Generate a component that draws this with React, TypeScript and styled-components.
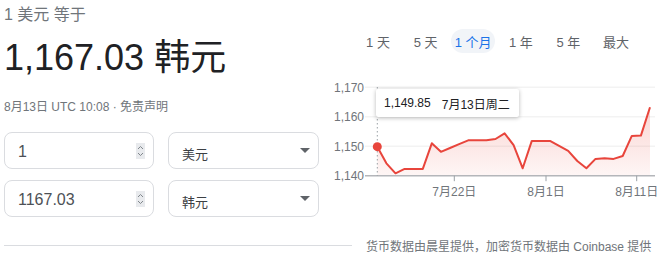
import styled, { createGlobalStyle } from "styled-components";

const GlobalStyle = createGlobalStyle`
  html, body {
    margin: 0;
    padding: 0;
    background: #ffffff;
  }
  body {
    font-family: "Liberation Sans", Arial, "Noto Sans CJK SC", sans-serif;
    color: #202124;
  }
`

const Page = styled.div`
  width: 664px;
  height: 269px;
  overflow: hidden;
  display: flex;
  flex-direction: column;
`

const Top = styled.div`
  display: flex;
  height: 237px;
`

const Left = styled.div`
  width: 330px;
  padding: 5px 0 0 4px;
  box-sizing: border-box;
  display: flex;
  flex-direction: column;
`

const Caption = styled.div`
  font-size: 16px;
  line-height: 20px;
  color: #70757a;
`

const Amount = styled.div`
  margin-top: 11px;
  font-size: 36px;
  line-height: 44px;
  color: #202124;
`

const Stamp = styled.div`
  margin-top: 19px;
  font-size: 12px;
  line-height: 16px;
  color: #70757a;
`

const Form = styled.div`
  margin-top: 17px;
  display: grid;
  grid-template-columns: 150px 151px;
  column-gap: 14px;
  row-gap: 11px;
`

const Field = styled.div`
  height: 37px;
  box-sizing: border-box;
  border: 1px solid #dadce0;
  border-radius: 8px;
  display: flex;
  align-items: center;
  padding: 0 8px 0 13px;
`

const FieldValue = styled.span`
  flex: 1;
  font-size: 16px;
  color: #4d5156;
  padding-top: 3px;
`

const Spinner = styled.span`
  width: 9px;
  height: 16px;
  background: #e8eaed;
  display: flex;
  align-items: center;
  justify-content: center;
`

const SelectValue = styled.span`
  flex: 1;
  font-size: 13px;
  color: #3c4043;
  padding-top: 5px;
`

const Right = styled.div`
  flex: 1;
  display: flex;
  flex-direction: column;
`

const Ranges = styled.div`
  margin-top: 29px;
  display: flex;
  justify-content: center;
  gap: 3.6px;
`

const Range = styled.span<{ $active?: boolean }>`
  width: 44px;
  height: 24px;
  border-radius: 12px;
  display: flex;
  align-items: center;
  justify-content: center;
  font-size: 13px;
  color: ${p => (p.$active ? "#1a73e8" : "#5f6368")};
  background: ${p => (p.$active ? "#f1f4f8" : "transparent")};
  white-space: pre;
`

const ChartWrap = styled.div`
  position: relative;
  margin-top: 25px;
  width: 334px;
  height: 124px;
`

const Tip = styled.div`
  position: absolute;
  left: 46px;
  top: 11px;
  height: 28px;
  padding: 0 9px 0 8px;
  display: flex;
  align-items: center;
  gap: 11px;
  background: #ffffff;
  border-radius: 2px;
  box-shadow: 0 1px 4px rgba(0, 0, 0, 0.28);
  font-size: 12px;
  color: #202124;
  white-space: nowrap;
`

const TipPrice = styled.span`
  font-weight: 500;
`

const Footer = styled.div`
  display: flex;
  align-items: center;
  height: 16px;
`

const Rule = styled.div`
  flex: 0 0 348px;
  margin-left: 4px;
  height: 1px;
  background: #dadce0;
`

const Source = styled.span`
  margin-left: 14px;
  font-size: 12px;
  color: #70757a;
  white-space: nowrap;
`

const AxisText = styled.text`
  font-family: "Liberation Sans", Arial, "Noto Sans CJK SC", sans-serif;
  font-size: 12px;
  fill: #70757a;
`

const prices = [
  1149.85, 1144.2, 1140.8, 1142.3, 1142.3, 1142.3, 1151.0, 1148.1, 1149.4, 1150.7,
  1152.0, 1152.0, 1152.0, 1152.45, 1154.4, 1150.4, 1142.5, 1151.8, 1151.8, 1151.8,
  1150.1, 1148.4, 1145.0, 1142.5, 1145.7, 1145.9, 1145.7, 1146.7, 1153.5, 1153.6, 1163.2,
]

const X0 = 47.3
const STEP = 9.09
const BASE = 97.7
const toY = (v: number) => BASE - (v - 1140) * 2.947

const Spin = () => (
  <svg width="7" height="12" viewBox="0 0 7 12">
    <path d="M1 4 L3.5 1.5 L6 4" fill="none" stroke="#80868b" strokeWidth="1" />
    <path d="M1 8 L3.5 10.5 L6 8" fill="none" stroke="#80868b" strokeWidth="1" />
  </svg>
)

const Caret = () => (
  <svg width="10" height="5" viewBox="0 0 10 5">
    <path d="M0 0 L10 0 L5 5 Z" fill="#5f6368" />
  </svg>
)

const Chart = () => {
  const pts = prices.map((v, i) => [X0 + i * STEP, toY(v)])
  const line = pts.map(([x, y], i) => `${i ? "L" : "M"}${x.toFixed(1)} ${y.toFixed(1)}`).join(" ")
  const last = pts[pts.length - 1]
  const area = `${line} L${last[0].toFixed(1)} ${BASE} L${X0} ${BASE} Z`
  const grid = [1170, 1160, 1150]

  return (
    <svg width="334" height="124" viewBox="0 0 334 124">
      <defs>
        <linearGradient id="fill" x1="0" y1="0" x2="0" y2="1" gradientUnits="objectBoundingBox">
          <stop offset="0" stopColor="#ea4335" stopOpacity="0.22" />
          <stop offset="1" stopColor="#ea4335" stopOpacity="0.05" />
        </linearGradient>
      </defs>
      {grid.map(v => (
        <line key={v} x1="35" x2="325" y1={toY(v)} y2={toY(v)} stroke="#f3f3f3" strokeWidth="1.5" />
      ))}
      {[1170, 1160, 1150, 1140].map(v => (
        <AxisText key={v} x="34" y={toY(v) + 4.5} textAnchor="end">
          {v.toLocaleString("en-US")}
        </AxisText>
      ))}
      <path d={area} fill="url(#fill)" />
      <line x1="35" x2="325" y1={BASE} y2={BASE} stroke="#b4b6ba" strokeWidth="1.6" />
      {[
        [124.3, "7月22日"],
        [216, "8月1日"],
        [306.7, "8月11日"],
      ].map(([x, label]) => (
        <g key={label as string}>
          <line x1={x} x2={x} y1={BASE} y2={BASE + 5.5} stroke="#9aa0a6" strokeWidth="1" />
          <AxisText x={x} y="117.5" textAnchor="middle">{label}</AxisText>
        </g>
      ))}
      <line x1={X0} x2={X0} y1="9" y2={BASE} stroke="#9aa0a6" strokeWidth="1" strokeDasharray="1.5 2.5" />
      <path d={line} fill="none" stroke="#e8453c" strokeWidth="2" strokeLinejoin="round" />
      <circle cx={X0} cy={toY(1149.85)} r="4.5" fill="#e8453c" />
    </svg>
  )
}

const ranges = ["1 天", "5 天", "1 个月", "1 年", "5 年", "最大"]

export default function App() {
  return (
    <Page>
      <GlobalStyle />
      <Top>
        <Left>
          <Caption>1 美元 等于</Caption>
          <Amount>1,167.03 韩元</Amount>
          <Stamp>8月13日 UTC 10:08 · 免责声明</Stamp>
          <Form>
            <Field>
              <FieldValue>1</FieldValue>
              <Spinner><Spin /></Spinner>
            </Field>
            <Field>
              <SelectValue>美元</SelectValue>
              <Caret />
            </Field>
            <Field>
              <FieldValue>1167.03</FieldValue>
              <Spinner><Spin /></Spinner>
            </Field>
            <Field>
              <SelectValue>韩元</SelectValue>
              <Caret />
            </Field>
          </Form>
        </Left>
        <Right>
          <Ranges>
            {ranges.map(r => (
              <Range key={r} $active={r === "1 个月"}>{r}</Range>
            ))}
          </Ranges>
          <ChartWrap>
            <Chart />
            <Tip>
              <TipPrice>1,149.85</TipPrice>
              <span>7月13日周二</span>
            </Tip>
          </ChartWrap>
        </Right>
      </Top>
      <Footer>
        <Rule />
        <Source>货币数据由晨星提供，加密货币数据由 Coinbase 提供</Source>
      </Footer>
    </Page>
  )
}
